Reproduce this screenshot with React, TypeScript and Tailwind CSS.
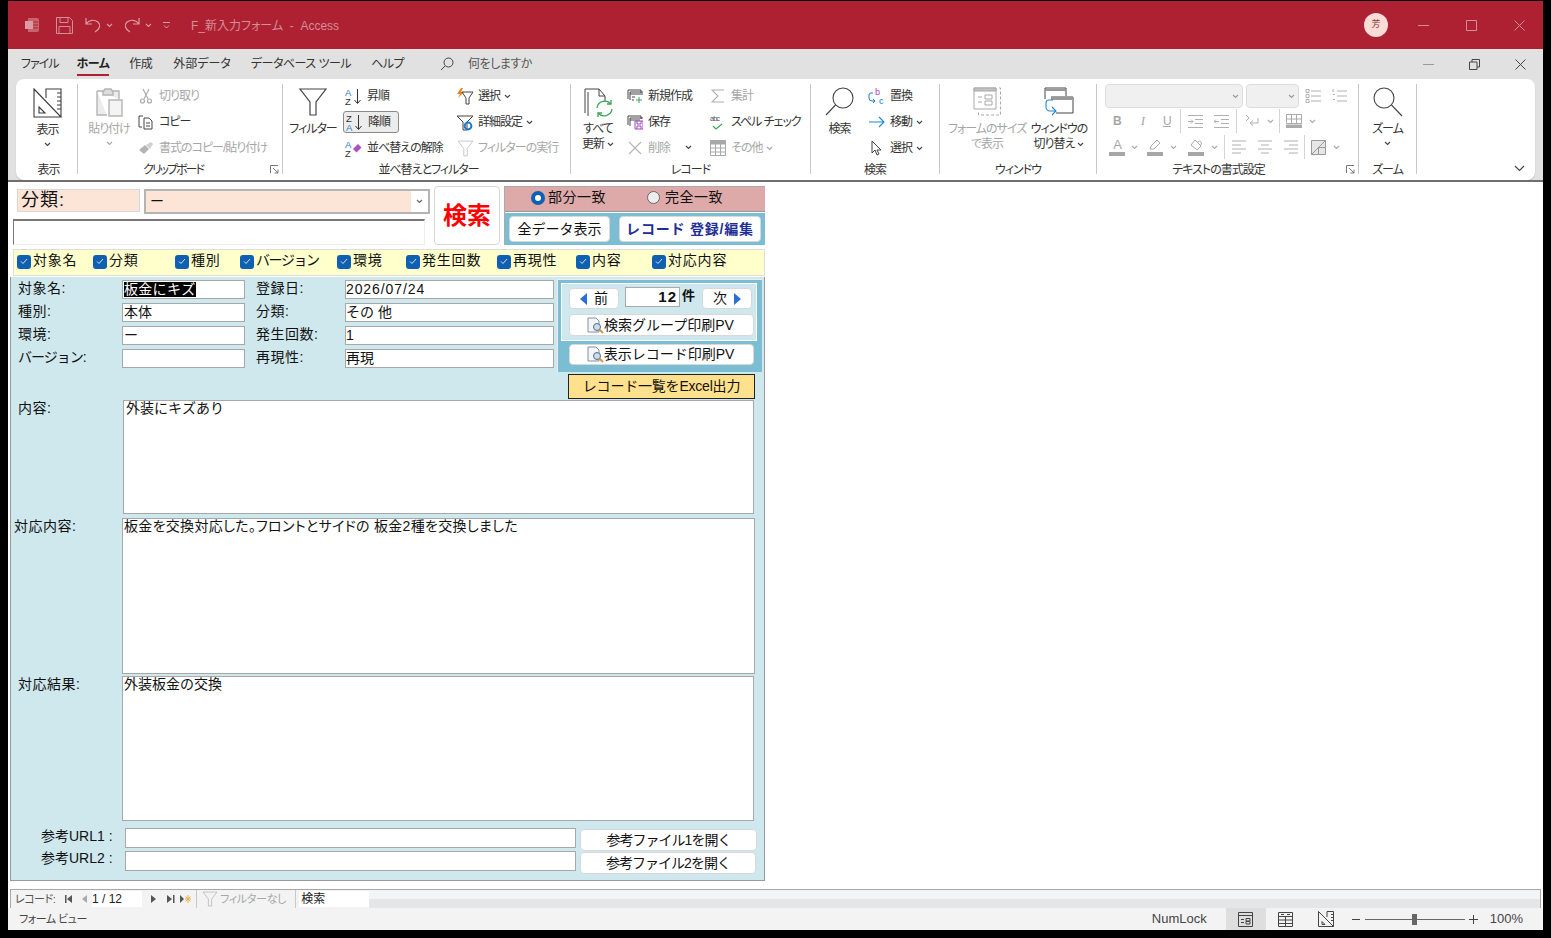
import React from 'react';

const JP = "font-['Liberation_Sans','Noto_Sans_CJK_JP',sans-serif]";

type IconProps = { className?: string };

const Chev = ({ className = 'text-[#444]' }: IconProps) => (
  <svg width="7" height="5" viewBox="0 0 7 5" className={className}>
    <path d="M1 1l2.5 2.5L6 1" fill="none" stroke="currentColor" strokeWidth="1.1" />
  </svg>
);

const DesignIcon = ({ size = 30 }: { size?: number }) => (
  <svg width={size} height={size} viewBox="0 0 30 30" fill="none" stroke="#3c3c3c" strokeWidth="1.1">
    <path d="M1 1l27 28H1zM6 19l6 6H6zM13 10V1h15v28M28 5h-4M28 9h-4M28 13h-4M28 17h-4M28 21h-4" />
  </svg>
);

const ClipIcon = () => (
  <svg width="28" height="32" viewBox="0 0 28 32" fill="none" stroke="#b4b4b4" strokeWidth="1.4">
    <path d="M2 4h22v8M2 4v24h10" fill="#ececec" />
    <path d="M8 5l2-3h6l2 3v3H8z" fill="#ddd" />
    <path d="M14 13h13v16H14z" fill="#f4f4f4" />
  </svg>
);

const Scissors = () => (
  <svg width="14" height="16" viewBox="0 0 14 16" fill="none" stroke="#a8a8a8" strokeWidth="1.1">
    <path d="M4 1l5 10M10 1L5 11" />
    <circle cx="3.5" cy="13" r="2" />
    <circle cx="10.5" cy="13" r="2" />
  </svg>
);

const CopyIcon = () => (
  <svg width="16" height="15" viewBox="0 0 16 15" fill="none" stroke="#444" strokeWidth="1">
    <path d="M5 1H1v11h3" />
    <path d="M6 3h5l3 3v8H6zM8 8h4M8 11h4" />
  </svg>
);

const BrushIcon = () => (
  <svg width="16" height="14" viewBox="0 0 16 14">
    <path d="M1 9l6-5 4 4-5 5z" fill="#b4b4b4" />
    <path d="M8 4l5-3 2 2-3 5z" fill="#d0d0d0" />
  </svg>
);

const Funnel = ({ size = 30, color = '#444' }: { size?: number; color?: string }) => (
  <svg width={size} height={size} viewBox="0 0 30 30" fill="none" stroke={color} strokeWidth="1.2">
    <path d="M2 2h26L18 15v13h-6V15z" />
  </svg>
);

const SortIcon = ({ top, bottom }: { top: string; bottom: string }) => (
  <svg width="18" height="17" viewBox="0 0 18 17">
    <text x="0" y="7.5" fontSize="9.5" fontFamily="Liberation Sans" fill={top === 'A' ? '#1e79c9' : '#333'}>{top}</text>
    <text x="0" y="16.5" fontSize="9.5" fontFamily="Liberation Sans" fill={bottom === 'A' ? '#1e79c9' : '#333'}>{bottom}</text>
    <path d="M12.5 1v14M9.5 12l3 3.5 3-3.5" fill="none" stroke="#333" strokeWidth="1" />
  </svg>
);

const ClearSort = () => (
  <svg width="18" height="17" viewBox="0 0 18 17">
    <text x="0" y="7.5" fontSize="9.5" fontFamily="Liberation Sans" fill="#1e79c9">A</text>
    <text x="0" y="16.5" fontSize="9.5" fontFamily="Liberation Sans" fill="#333">Z</text>
    <path d="M8 9l5-5 3.500 3.500-5 5z" fill="#b04fc0" />
  </svg>
);

const SelectFilter = () => (
  <svg width="18" height="17" viewBox="0 0 18 17">
    <path d="M5 0L1 6h3L2 10l6-6H5l2-4z" fill="#e8841a" />
    <path d="M6 4h11l-4 6v6h-3v-6z" fill="none" stroke="#444" strokeWidth="1" />
  </svg>
);

const AdvFilter = () => (
  <svg width="18" height="17" viewBox="0 0 18 17">
    <path d="M1 2h16l-6 6v8H7V8z" fill="none" stroke="#444" strokeWidth="1" />
    <circle cx="12" cy="12" r="3.4" fill="none" stroke="#1e79c9" strokeWidth="2" />
  </svg>
);

const RefreshIcon = () => (
  <svg width="30" height="32" viewBox="0 0 30 32" fill="none">
    <path d="M2 26V2h14l6 7v6M5 29V5" stroke="#444" strokeWidth="1" />
    <path d="M16 2v7h6" stroke="#444" strokeWidth="1" />
    <path d="M14 21a8 8 0 0 1 14-4M29 22a8 8 0 0 1-14 4" stroke="#3aa655" strokeWidth="1.3" />
    <path d="M28 13v4h-4M15 30v-4h4" stroke="#3aa655" strokeWidth="1.3" />
  </svg>
);

const NewRec = () => (
  <svg width="16" height="15" viewBox="0 0 16 15" fill="none" stroke="#444" strokeWidth="1">
    <path d="M1 10V1h13v3M3 11V3h13M3 5h13" />
    <path d="M5 8h3M5 11h2" />
    <path d="M12 8v6M9 11h6" stroke="#3aa655" />
  </svg>
);

const SaveRec = () => (
  <svg width="16" height="15" viewBox="0 0 16 15" fill="none" stroke="#444" strokeWidth="1">
    <path d="M1 10V1h13v3M3 11V3h13M3 5h10" />
    <path d="M8 6h8v8H8zM10 6v3h4V6M10 14v-3h4v3" stroke="#a844c0" />
  </svg>
);

const DeleteIcon = () => (
  <svg width="14" height="14" viewBox="0 0 14 14" stroke="#b4b4b4" strokeWidth="1.1">
    <path d="M1 1l12 12M13 1L1 13" />
  </svg>
);

const SigmaIcon = () => (
  <svg width="14" height="14" viewBox="0 0 14 14" fill="none" stroke="#b0b0b0" strokeWidth="1.1">
    <path d="M13 1H1l6 6-6 6h12" />
  </svg>
);

const SpellIcon = () => (
  <svg width="16" height="15" viewBox="0 0 16 15">
    <text x="0" y="6" fontSize="7.5" fontFamily="Liberation Sans" fill="#555">abc</text>
    <path d="M3 11l3 3 6-5" fill="none" stroke="#3aa655" strokeWidth="1.1" />
  </svg>
);

const GridIcon = ({ color = '#a8a8a8' }: { color?: string }) => (
  <svg width="16" height="16" viewBox="0 0 16 16" fill="none" stroke={color} strokeWidth="1">
    <path d="M.5.5h15v15H.5z" />
    <path d="M.5 1h15v3H.5z" fill={color} />
    <path d="M.5 8h15M.5 12h15M5.5 4v11.5M10.5 4v11.5" />
  </svg>
);

const Lens = ({ size = 30 }: { size?: number }) => (
  <svg width={size} height={size} viewBox="0 0 30 30" fill="none" stroke="#444" strokeWidth="1.1">
    <circle cx="18" cy="11" r="10" />
    <path d="M10.5 18L1 28" />
  </svg>
);

const LensFlip = () => (
  <svg width="30" height="30" viewBox="0 0 30 30" fill="none" stroke="#444" strokeWidth="1.1">
    <circle cx="11" cy="11" r="10" />
    <path d="M18.5 18L29 29" />
  </svg>
);

const ReplaceIcon = () => (
  <svg width="18" height="17" viewBox="0 0 18 17">
    <text x="7" y="7" fontSize="9" fontFamily="Liberation Sans" fill="#a844c0">b</text>
    <text x="11" y="16" fontSize="9" fontFamily="Liberation Sans" fill="#1e79c9">c</text>
    <path d="M5 5H3a2 2 0 0 0-2 2v3a3 3 0 0 0 3 3h3M5 11l2 2-2 2" fill="none" stroke="#1e79c9" strokeWidth="1" />
  </svg>
);

const ArrowBlue = () => (
  <svg width="16" height="12" viewBox="0 0 16 12" fill="none" stroke="#1e88d2" strokeWidth="1.1">
    <path d="M0 6h15M10 1l5 5-5 5" />
  </svg>
);

const Pointer = () => (
  <svg width="12" height="16" viewBox="0 0 12 16" fill="#fff" stroke="#444" strokeWidth="1">
    <path d="M1 1v12l3-3 2 5 2-1-2-4h4z" />
  </svg>
);

const FitIcon = () => (
  <svg width="28" height="30" viewBox="0 0 28 30" fill="none" stroke="#a8a8a8" strokeWidth="1">
    <path d="M1 1h22v21H1z" />
    <path d="M1 1h22v3H1z" fill="#c4c4c4" />
    <path d="M5 10h4M5 15h4M12 8h7v4h-7zM12 14h7v4h-7z" />
    <path d="M26 1h1.5v27h-22V24" strokeDasharray="3 2" />
  </svg>
);

const SwitchIcon = () => (
  <svg width="30" height="30" viewBox="0 0 30 30" fill="none">
    <path d="M1 12V1h21v8" stroke="#444" strokeWidth="1" />
    <path d="M1 2h21v2H1z" fill="#999" />
    <path d="M7 10h22v16H12" stroke="#444" strokeWidth="1" />
    <path d="M7 10h22v3H7z" fill="#999" />
    <path d="M9 13H5a3 3 0 0 0-3 3v4a4 4 0 0 0 4 4h6M8 20l4 4-4 4" stroke="#1e88d2" strokeWidth="1.1" />
  </svg>
);

const MiniLines = ({ kind }: { kind: 'left' | 'center' | 'right' }) => {
  const d =
    kind === 'left'
      ? 'M0 1h14M0 5h9M0 9h14M0 13h9'
      : kind === 'center'
        ? 'M0 1h14M3 5h8M0 9h14M3 13h8'
        : 'M0 1h14M5 5h9M0 9h14M5 13h9';
  return (
    <svg width="14" height="14" viewBox="0 0 14 14" stroke="#b0b0b0" strokeWidth="1">
      <path d={d} />
    </svg>
  );
};

const Indent = ({ flip = false }: { flip?: boolean }) => (
  <svg width="15" height="13" viewBox="0 0 15 13" fill="none" stroke="#b0b0b0" strokeWidth="1">
    <path d="M0 .5h15M7 4.5h8M7 8.5h8M0 12.5h15" />
    <path d={flip ? 'M5 6.5H0M2 4.5l-2 2 2 2' : 'M0 6.5h5M3 4.5l2 2-2 2'} />
  </svg>
);

const TitleCtrl = ({ d }: { d: string }) => (
  <svg width="11" height="11" viewBox="0 0 11 11" fill="none" stroke="currentColor" strokeWidth="1">
    <path d={d} />
  </svg>
);

const SmallBtn = ({
  icon,
  label,
  dim = false,
  caret = false,
  w,
  boxed = false,
}: {
  icon: React.ReactNode;
  label: string;
  dim?: boolean;
  caret?: boolean;
  w: string;
  boxed?: boolean;
}) => (
  <div
    className={`flex h-[22px] translate-y-px items-center gap-[4px] rounded-[3px] pl-[2px] ${w} ${boxed ? 'border border-[#8a8a8a] bg-[#ececec]' : ''}`}
  >
    <span className="flex w-[18px] shrink-0 justify-center">{icon}</span>
    <span className={`whitespace-nowrap text-[12px] ${dim ? 'text-[#a6a6a6]' : 'text-[#333]'}`}>{label}</span>
    {caret && <Chev className={dim ? 'text-[#aaa]' : 'text-[#444]'} />}
  </div>
);

const BigBtn = ({
  icon,
  lines,
  dim = false,
  w,
  caret = false,
  inlineCaret = false,
}: {
  icon: React.ReactNode;
  lines: string[];
  dim?: boolean;
  w: string;
  caret?: boolean;
  inlineCaret?: boolean;
}) => (
  <div className={`flex flex-col items-center ${w}`}>
    <div className="flex h-[34px] items-start pt-[3px]">{icon}</div>
    <div className={`mt-[4px] text-center text-[12px] leading-[15px] ${dim ? 'text-[#a6a6a6]' : 'text-[#333]'}`}>
      {lines.map((l, i) => (
        <div key={l} className="flex items-center justify-center gap-[3px] whitespace-nowrap">
          {l}
          {inlineCaret && i === lines.length - 1 && <Chev />}
        </div>
      ))}
    </div>
    {caret && (
      <div className="mt-[4px]">
        <Chev className={dim ? 'text-[#aaa]' : 'text-[#444]'} />
      </div>
    )}
  </div>
);

const Group = ({
  w,
  label,
  labelClass = '',
  launcher = false,
  children,
}: {
  w: string;
  label: string;
  labelClass?: string;
  launcher?: boolean;
  children: React.ReactNode;
}) => (
  <div className={`relative flex h-[90px] shrink-0 flex-col border-r border-[#c8c8c8] ${w}`}>
    <div className="flex h-[76px] shrink-0">{children}</div>
    <div className={`h-[14px] whitespace-nowrap text-center text-[12px] leading-[20px] text-[#333] ${labelClass}`}>{label}</div>
    {launcher && (
      <svg width="9" height="9" viewBox="0 0 9 9" className="absolute bottom-[0px] right-[3px]" fill="none" stroke="#777">
        <path d="M.5 8V.5H8M3 3l5 5M8 4.5V8H4.5" />
      </svg>
    )}
  </div>
);

const Ribbon = () => (
  <div className="mx-[8px] flex h-[101px] rounded-[8px] bg-white pt-[5px] tracking-[-1px] shadow-[0_1px_1px_#bbb]">
    <Group w="w-[62px]" label="表示" labelClass="pl-[4px]">
      <BigBtn w="w-[61px] ml-[2px] pt-[1px]" icon={<DesignIcon />} lines={['表示']} caret />
    </Group>

    <Group w="w-[205px]" label="クリップボード" labelClass="pr-[14px] tracking-[-2px]" launcher>
      <BigBtn w="w-[50px] ml-[6px]" icon={<ClipIcon />} lines={['貼り付け']} dim caret />
      <div className="ml-[1px] flex flex-col gap-[4px]">
        <SmallBtn w="w-[140px]" icon={<Scissors />} label="切り取り" dim />
        <SmallBtn w="w-[140px]" icon={<CopyIcon />} label="コピー" />
        <SmallBtn w="w-[140px]" icon={<BrushIcon />} label="書式のコピー/貼り付け" dim />
      </div>
    </Group>

    <Group w="w-[288px]" label="並べ替えとフィルター" labelClass="pl-[4px]">
      <BigBtn w="w-[60px]" icon={<Funnel />} lines={['フィルター']} />
      <div className="flex w-[111px] flex-col gap-[4px]">
        <SmallBtn w="w-[56px]" icon={<SortIcon top="A" bottom="Z" />} label="昇順" />
        <SmallBtn w="w-[56px]" icon={<SortIcon top="Z" bottom="A" />} label="降順" boxed />
        <SmallBtn w="w-[110px]" icon={<ClearSort />} label="並べ替えの解除" />
      </div>
      <div className="flex flex-col gap-[4px]">
        <SmallBtn w="w-[100px]" icon={<SelectFilter />} label="選択" caret />
        <SmallBtn w="w-[100px]" icon={<AdvFilter />} label="詳細設定" caret />
        <SmallBtn w="w-[110px]" icon={<Funnel size={17} color="#b0b0b0" />} label="フィルターの実行" dim />
      </div>
    </Group>

    <Group w="w-[240px]" label="レコード">
      <BigBtn w="w-[52px] ml-[1px]" icon={<RefreshIcon />} lines={['すべて', '更新']} inlineCaret />
      <div className="flex w-[83px] flex-col gap-[4px]">
        <SmallBtn w="w-[80px]" icon={<NewRec />} label="新規作成" />
        <SmallBtn w="w-[80px]" icon={<SaveRec />} label="保存" />
        <div className="flex w-[70px] items-center justify-between pr-[2px]">
          <SmallBtn w="w-[50px]" icon={<DeleteIcon />} label="削除" dim />
          <Chev />
        </div>
      </div>
      <div className="flex flex-col gap-[4px]">
        <SmallBtn w="w-[90px]" icon={<SigmaIcon />} label="集計" dim />
        <SmallBtn w="w-[90px]" icon={<SpellIcon />} label="スペル チェック" />
        <SmallBtn w="w-[90px]" icon={<GridIcon />} label="その他" dim caret />
      </div>
    </Group>

    <Group w="w-[129px]" label="検索">
      <BigBtn w="w-[53px] ml-[2px]" icon={<Lens />} lines={['検索']} />
      <div className="flex flex-col gap-[4px]">
        <SmallBtn w="w-[70px]" icon={<ReplaceIcon />} label="置換" />
        <SmallBtn w="w-[70px]" icon={<ArrowBlue />} label="移動" caret />
        <SmallBtn w="w-[70px]" icon={<Pointer />} label="選択" caret />
      </div>
    </Group>

    <Group w="w-[157px]" label="ウィンドウ">
      <BigBtn w="w-[82px] ml-[6px]" icon={<FitIcon />} lines={['フォームのサイズ', 'で表示']} dim />
      <BigBtn w="w-[62px]" icon={<SwitchIcon />} lines={['ウィンドウの', '切り替え']} inlineCaret />
    </Group>

    <Group w="w-[262px]" label="テキストの書式設定" labelClass="pr-[18px]" launcher>
      <div className="ml-[8px] flex flex-col">
        <div className="flex items-center">
          <div className="flex h-[24px] w-[138px] items-center justify-end rounded-[4px] border border-[#ddd] bg-[#f0f0f0] pr-[3px]">
            <Chev className="text-[#999]" />
          </div>
          <div className="ml-[3px] flex h-[24px] w-[53px] items-center justify-end rounded-[4px] border border-[#ddd] bg-[#f0f0f0] pr-[3px]">
            <Chev className="text-[#999]" />
          </div>
          <svg width="16" height="16" viewBox="0 0 16 16" className="ml-[6px]" stroke="#b0b0b0" fill="none">
            <path d="M6 3h10M6 8h10M6 13h10M1 1.5h3v3H1zM1 6.5h3v3H1zM1 11.5h3v3H1z" />
          </svg>
          <svg width="16" height="16" viewBox="0 0 16 16" className="ml-[10px]" stroke="#b0b0b0" fill="none">
            <path d="M6 3h10M6 8h10M6 13h10M2 1v3M2 6.5h2M2 11.5h2" />
          </svg>
        </div>
        <div className="mt-[1px] flex h-[24px] items-center text-[#a6a6a6]">
          <span className="ml-[8px] font-['Liberation_Sans',sans-serif] text-[12px] font-bold">B</span>
          <span className="ml-[20px] font-['Liberation_Serif',serif] text-[13px] italic">I</span>
          <span className="ml-[19px] font-['Liberation_Sans',sans-serif] text-[12px] underline">U</span>
          <div className="ml-[9px] h-[24px] w-px bg-[#d4d4d4]" />
          <div className="ml-[7px]"><Indent /></div>
          <div className="ml-[11px]"><Indent flip /></div>
          <div className="ml-[7px] h-[24px] w-px bg-[#d4d4d4]" />
          <svg width="15" height="14" viewBox="0 0 15 14" className="ml-[8px]" fill="none" stroke="#b0b0b0">
            <path d="M1 1l3 3-3 3M13 4v5H5M8 6.5L5 9l3 2.500" />
          </svg>
          <div className="ml-[7px]"><Chev className="text-[#aaa]" /></div>
          <div className="ml-[5px] h-[24px] w-px bg-[#d4d4d4]" />
          <div className="ml-[6px] flex flex-col">
            <svg width="16" height="14" viewBox="0 0 16 14" fill="none" stroke="#aaa">
              <path d="M.5.500h15v9H.5zM.5 5h15M5.500.500v9M10.500.500v9" />
              <path d="M0 11h16v3H0z" fill="#aaa" />
            </svg>
          </div>
          <div className="ml-[7px]"><Chev className="text-[#aaa]" /></div>
        </div>
        <div className="mt-[2px] flex h-[24px] items-center">
          <div className="ml-[4px] flex w-[16px] flex-col items-center">
            <span className="font-['Liberation_Sans',sans-serif] text-[13px] leading-[12px] text-[#a6a6a6]">A</span>
            <div className="mt-[1px] h-[4px] w-[16px] bg-[#a6a6a6]" />
          </div>
          <div className="ml-[6px]"><Chev className="text-[#aaa]" /></div>
          <div className="ml-[9px] flex w-[16px] flex-col items-center">
            <svg width="14" height="12" viewBox="0 0 14 12" fill="none" stroke="#aaa">
              <path d="M2 10l1-3 6-6 3 3-6 6z" />
            </svg>
            <div className="mt-[1px] h-[4px] w-[16px] bg-[#a6a6a6]" />
          </div>
          <div className="ml-[7px]"><Chev className="text-[#aaa]" /></div>
          <div className="ml-[11px] flex w-[16px] flex-col items-center">
            <svg width="14" height="12" viewBox="0 0 14 12" fill="none" stroke="#aaa">
              <path d="M6 1l6 6-4 4-6-5zM9 3c2-2 4 0 3 3" />
            </svg>
            <div className="mt-[1px] h-[4px] w-[16px] bg-[#a6a6a6]" />
          </div>
          <div className="ml-[7px]"><Chev className="text-[#aaa]" /></div>
          <div className="ml-[6px] h-[24px] w-px bg-[#d4d4d4]" />
          <div className="ml-[7px]"><MiniLines kind="left" /></div>
          <div className="ml-[12px]"><MiniLines kind="center" /></div>
          <div className="ml-[12px]"><MiniLines kind="right" /></div>
          <div className="ml-[6px] h-[24px] w-px bg-[#d4d4d4]" />
          <svg width="15" height="15" viewBox="0 0 15 15" className="ml-[6px]" fill="#e6e6e6" stroke="#999">
            <path d="M.5.500h14v14H.5zM.5 14.500l14-14M7.500 7.500v7M7.500 7.500h7" />
          </svg>
          <div className="ml-[7px]"><Chev className="text-[#aaa]" /></div>
        </div>
      </div>
    </Group>

    <Group w="w-[58px]" label="ズーム">
      <BigBtn w="w-[60px]" icon={<LensFlip />} lines={['ズーム']} caret />
    </Group>

    <div className="flex flex-1 items-end justify-end pb-[8px] pr-[10px]">
      <svg width="11" height="7" viewBox="0 0 11 7" fill="none" stroke="#444" strokeWidth="1.1">
        <path d="M1 1l4.500 4.500L10 1" />
      </svg>
    </div>
  </div>
);

const TitleBar = () => (
  <div className="flex h-[48px] items-center bg-[#ae2132] text-[#d58e98]">
    <svg width="16" height="16" viewBox="0 0 16 16" className="ml-[16px]">
      <path d="M4 1h9a2 2 0 0 1 2 2v10a2 2 0 0 1-2 2H4z" fill="#c9646f" />
      <path d="M1 4h8v8H1z" fill="#dc9aa3" />
      <path d="M9 5h5M9 8h5M9 11h5" stroke="#ae2132" />
    </svg>
    <svg width="17" height="17" viewBox="0 0 17 17" className="ml-[16px]" fill="none" stroke="currentColor">
      <path d="M.5.500h13l3 3v13H.5zM4 .500v5h8v-5M3 16.500v-7h11v7" />
    </svg>
    <svg width="16" height="16" viewBox="0 0 16 16" className="ml-[12px]" fill="none" stroke="#dc9aa3" strokeWidth="1.2">
      <path d="M1 1v6h6M1 7c3-4 8-5 12-2 3 3 2 7-3 10" />
    </svg>
    <Chev className="ml-[5px] text-[#dc9aa3]" />
    <svg width="16" height="16" viewBox="0 0 16 16" className="ml-[11px]" fill="none" stroke="#dc9aa3" strokeWidth="1.2">
      <path d="M15 1v6H9M15 7c-3-4-8-5-12-2-3 3-2 7 3 10" />
    </svg>
    <Chev className="ml-[5px] text-[#dc9aa3]" />
    <svg width="7" height="7" viewBox="0 0 7 7" className="ml-[11px]" fill="none" stroke="#dc9aa3">
      <path d="M0 .500h7M1 3.500l2.500 2.500L6 3.500" />
    </svg>
    <span className="ml-[21px] mt-[2px] whitespace-pre text-[12px] text-[#d58e98]">F_新入力フォーム  -  Access</span>
    <div className="ml-auto flex items-center">
      <div className="flex h-[24px] w-[24px] items-center justify-center rounded-full bg-[#fbdcd6] text-[9px] text-[#8a3a3a]">芳</div>
      <div className="ml-[30px] w-[11px]"><TitleCtrl d="M0 5.500h11" /></div>
      <div className="ml-[37px] w-[11px]"><TitleCtrl d="M.5.500h10v10H.5z" /></div>
      <div className="ml-[37px] mr-[18px] w-[11px]"><TitleCtrl d="M.5.500l10 10M10.500.500l-10 10" /></div>
    </div>
  </div>
);

const TabBar = () => (
  <div className="flex h-[30px] items-center text-[12px] tracking-[-0.5px] text-[#333]">
    <span className="ml-[13px] tracking-[-1px]">ファイル</span>
    <span className="relative ml-[18px] font-bold text-[#222]">
      ホーム
      <span className="absolute bottom-[-3px] left-0 h-[2px] w-full bg-[#ae2132]" />
    </span>
    <span className="ml-[20px]">作成</span>
    <span className="ml-[21px] tracking-normal">外部データ</span>
    <span className="ml-[20px]">データベース ツール</span>
    <span className="ml-[20px]">ヘルプ</span>
    <svg width="14" height="14" viewBox="0 0 14 14" className="ml-[36px]" fill="none" stroke="#444">
      <circle cx="8.500" cy="5.500" r="4.500" />
      <path d="M5 9l-4 4" />
    </svg>
    <span className="ml-[14px] text-[#555]">何をしますか</span>
    <div className="ml-auto flex items-center text-[#444]">
      <div className="w-[11px] text-[#999]"><TitleCtrl d="M0 5.500h11" /></div>
      <div className="ml-[35px] w-[11px]"><TitleCtrl d="M.5 3h7.500v7.500H.5zM3 3V.500h7.500V8H8" /></div>
      <div className="ml-[35px] mr-[17px] w-[11px]"><TitleCtrl d="M.5.500l10 10M10.500.500l-10 10" /></div>
    </div>
  </div>
);

const Check = ({ label, w, tight = false }: { label: string; w: string; tight?: boolean }) => (
  <div className={`flex items-center ${w}`}>
    <div className="flex h-[14px] w-[14px] shrink-0 items-center justify-center rounded-[3px] bg-[#0f5fb3]">
      <svg width="8" height="7" viewBox="0 0 8 7" fill="none" stroke="#cfe2f5" strokeWidth="1">
        <path d="M1 3.500L3 5.500 7 1" />
      </svg>
    </div>
    <span className={`ml-[2px] -translate-y-px whitespace-nowrap ${tight ? 'tracking-[-1.400px]' : 'tracking-[0.8px]'}`}>{label}</span>
  </div>
);

const Field = ({ children, w, selected, wide }: { children?: string; w: string; selected?: boolean; wide?: boolean }) => (
  <div className={`flex h-[19px] shrink-0 items-center overflow-hidden border border-[#a8a8a8] bg-white pl-[1px] ${w}`}>
    {selected ? (
      <span className="bg-black leading-[15px] tracking-[0.3px] text-white">{children}</span>
    ) : (
      <span className={`whitespace-nowrap ${wide ? 'tracking-[0.9px]' : ''}`}>{children}</span>
    )}
  </div>
);

const FieldRow = ({ a, av, b, bv, sel, wide }: { a: string; av?: string; b: string; bv: string; sel?: boolean; wide?: boolean }) => (
  <div className="flex h-[19px] items-center">
    <span className={`ml-[7px] w-[104px] shrink-0 -translate-y-px whitespace-nowrap ${a.length > 5 ? 'tracking-[-1px]' : 'tracking-[0.5px]'}`}>{a}</span>
    <Field w="w-[123px]" selected={sel}>{av}</Field>
    <span className="ml-[11px] w-[89px] shrink-0 -translate-y-px tracking-[0.5px]">{b}</span>
    <Field w="w-[209px] pl-0!" wide={wide}>{bv}</Field>
  </div>
);

const FormBtn = ({ children, className = '' }: { children: React.ReactNode; className?: string }) => (
  <div className={`flex items-center justify-center rounded-[4px] border border-[#d8d8d8] bg-white ${className}`}>{children}</div>
);

const PrintIcon = () => (
  <svg width="17" height="17" viewBox="0 0 17 17">
    <path d="M1 1h8l3 3v11H1z" fill="#f4f6fa" stroke="#8090a8" />
    <circle cx="10" cy="10" r="3.500" fill="#bfe0f5" stroke="#667" />
    <path d="M12.500 12.500l3.500 3.500" stroke="#d49a3a" strokeWidth="2" />
  </svg>
);

const Triangle = ({ flip = false }: { flip?: boolean }) => (
  <svg width="7" height="12" viewBox="0 0 7 12">
    <path d={flip ? 'M0 0l7 6-7 6z' : 'M7 0L0 6l7 6z'} fill="#2a6fd6" />
  </svg>
);

const Memo = ({ children, className }: { children: string; className: string }) => (
  <div className={`shrink-0 border border-[#a8a8a8] bg-white px-[1px] leading-[14px] ${className}`}>{children}</div>
);

const AccessForm = () => (
  <div className="ml-[2px] mt-[4px] w-[755px] text-[14px] text-[#111]">
    <div className="flex h-[59px]">
      <div className="w-[420px]">
        <div className="mt-[3px] flex items-start">
          <div className="ml-[7px] flex h-[23px] w-[123px] items-center border border-[#d8d8d8] bg-[#fce4d6] pl-[3px] text-[18px] tracking-[1px]">分類:</div>
          <div className="ml-[4px] flex h-[25px] w-[286px] items-center border-2 border-[#b4b4b4] bg-[#fce4d6] pl-[4px]">
            <span>ー</span>
            <div className="ml-auto flex h-full w-[17px] items-center justify-center bg-white">
              <Chev className="text-[#666]" />
            </div>
          </div>
        </div>
        <div className="ml-[3px] mt-[5px] h-[26px] w-[412px] border-b border-l border-r border-t-2 border-b-[#eee] border-l-[#777] border-r-[#eee] border-t-[#777] bg-white" />
      </div>
      <div className="ml-[4px] flex h-[59px] w-[66px] items-center justify-center rounded-[4px] border border-[#d8d8d8] bg-white text-[24px] font-bold text-[#f00]">
        検索
      </div>
      <div className="ml-[4px] w-[261px] border-l border-t border-[#aaa]">
        <div className="flex h-[25px] items-center border-b border-[#999] bg-[#dea9a9] pb-[3px] tracking-[0.5px]">
          <div className="ml-[26px] flex h-[14px] w-[14px] items-center justify-center rounded-full bg-[#0f5fb3]">
            <div className="h-[6px] w-[6px] rounded-full bg-white" />
          </div>
          <span className="ml-[3px]">部分一致</span>
          <div className="ml-[41px] h-[13px] w-[13px] rounded-full border border-[#666] bg-[#eee]" />
          <span className="ml-[5px]">完全一致</span>
        </div>
        <div className="mt-[1px] flex h-[32px] items-center bg-[#7bbdd3]">
          <FormBtn className="ml-[4px] h-[26px] w-[101px]">全データ表示</FormBtn>
          <FormBtn className="ml-[9px] h-[26px] w-[142px] font-bold tracking-[0.8px] text-[#1f2f96]">レコード 登録/編集</FormBtn>
        </div>
      </div>
    </div>

    <div className="ml-[3px] mt-[4px] flex h-[27px] items-center border border-[#ddd] bg-[#ffffcc] pb-[2px] pl-[3px]">
      <Check w="w-[76px]" label="対象名" />
      <Check w="w-[82px]" label="分類" />
      <Check w="w-[65px]" label="種別" />
      <Check w="w-[97px]" label="バージョン" tight />
      <Check w="w-[69px]" label="環境" />
      <Check w="w-[91px]" label="発生回数" />
      <Check w="w-[79px]" label="再現性" />
      <Check w="w-[76px]" label="内容" />
      <Check w="w-[90px]" label="対応内容" />
    </div>

    <div className="mt-[1px] h-[604px] border-b border-l border-r border-[#999] bg-[#cfe8ee]">
      <div className="flex h-[122px]">
        <div className="flex w-[545px] shrink-0 flex-col gap-[4px] pt-[3px]">
          <FieldRow a="対象名:" av="板金にキズ" b="登録日:" bv="2026/07/24" sel wide />
          <FieldRow a="種別:" av="本体" b="分類:" bv="その 他" />
          <FieldRow a="環境:" av="ー" b="発生回数:" bv="1" />
          <FieldRow a="バージョン:" b="再現性:" bv="再現" />
        </div>
        <div className="ml-[1px] pt-[2px]">
          <div className="h-[93px] w-[205px] border-l border-t border-[#eee] bg-[#7bbdd3] pl-[3px] pt-[3px]">
            <div className="h-[58px] w-[196px] border border-white bg-[#cfe8ee] pl-[7px] pt-[3px]">
              <div className="flex items-start">
                <FormBtn className="mt-[1px] h-[21px] w-[50px] gap-[7px]"><Triangle />前</FormBtn>
                <div className="ml-[6px] flex h-[20px] w-[55px] items-center justify-end border border-[#a8a8a8] bg-white pr-[2px] text-[15px] font-bold tracking-[1px]">12</div>
                <span className="ml-[2px] text-[13px] font-bold leading-[18px]">件</span>
                <FormBtn className="ml-[7px] mt-[1px] h-[21px] w-[50px] gap-[7px]">次<Triangle flip /></FormBtn>
              </div>
              <FormBtn className="mt-[5px] h-[22px] w-[185px] pr-[2px]"><PrintIcon />検索グループ印刷PV</FormBtn>
            </div>
            <FormBtn className="ml-[8px] mt-[3px] h-[21px] w-[185px] pr-[2px]"><PrintIcon />表示レコード印刷PV</FormBtn>
          </div>
          <div className="ml-[11px] mt-[2px] flex h-[25px] w-[187px] items-center justify-center border border-[#222] bg-[#ffe08c] tracking-[-0.2px]">レコード一覧をExcel出力</div>
        </div>
      </div>

      <div className="mt-[1px] flex">
        <span className="ml-[7px] mt-[-2px] w-[105px] shrink-0 tracking-[0.5px]">内容:</span>
        <Memo className="h-[114px] w-[631px] pl-[2px]">外装にキズあり</Memo>
      </div>
      <div className="mt-[4px] flex">
        <span className="ml-[3px] mt-[-2px] w-[108px] shrink-0 tracking-[0.5px]">対応内容:</span>
        <Memo className="h-[156px] w-[633px] tracking-[0.3px] [font-feature-settings:'palt']">板金を交換対応した。フロントとサイドの 板金2種を交換しました</Memo>
      </div>
      <div className="mt-[2px] flex">
        <span className="ml-[7px] mt-[-2px] w-[104px] shrink-0 tracking-[0.5px]">対応結果:</span>
        <Memo className="h-[145px] w-[632px]">外装板金の交換</Memo>
      </div>

      <div className="mt-[7px] flex items-start">
        <span className="ml-[30px] w-[84px] shrink-0 leading-[16px]">参考URL1 :</span>
        <div className="h-[20px] w-[451px] border border-[#a8a8a8] bg-white" />
        <FormBtn className="ml-[4px] mt-[1px] h-[22px] w-[177px] tracking-[-1px]">参考ファイル1を開く</FormBtn>
      </div>
      <div className="flex items-start">
        <span className="ml-[30px] w-[84px] shrink-0 leading-[14px]">参考URL2 :</span>
        <div className="h-[20px] w-[451px] border border-[#a8a8a8] bg-white" />
        <FormBtn className="ml-[4px] mt-[1px] h-[22px] w-[176px] tracking-[-1px]">参考ファイル2を開く</FormBtn>
      </div>
    </div>
  </div>
);

const NavBar = () => (
  <div className="mx-[2px] flex h-[19px] items-stretch border-x border-t border-[#a8a8a8] bg-[linear-gradient(#f3f4f6_50%,#e4e6e8_50%)] text-[11px] text-[#555]">
    <div className="flex items-center bg-[#f3f3f3] pl-[4px]">
      <span className="w-[47px] whitespace-nowrap tracking-[-0.5px]">レコード:</span>
      <svg width="8" height="8" viewBox="0 0 8 8" className="ml-[3px]" fill="#555"><path d="M0 0h1.500v8H0zM7 0v8L2 4z" /></svg>
      <svg width="5" height="8" viewBox="0 0 5 8" className="ml-[9px]" fill="#aaa"><path d="M5 0v8L0 4z" /></svg>
      <div className="ml-[5px] flex h-[16px] w-[50px] items-center bg-white text-[12px] text-[#222]">1 / 12</div>
      <svg width="5" height="8" viewBox="0 0 5 8" className="ml-[9px]" fill="#555"><path d="M0 0v8l5-4z" /></svg>
      <svg width="8" height="8" viewBox="0 0 8 8" className="ml-[11px]" fill="#555"><path d="M0 0v8l5-4zM6 0h1.500v8H6z" /></svg>
      <svg width="11" height="8" viewBox="0 0 11 8" className="ml-[5px]">
        <path d="M0 0v8l4-4z" fill="#555" />
        <path d="M8 0v8M5 4h6M5.500 1.500l5 5M10.500 1.500l-5 5" stroke="#e8b04a" />
      </svg>
      <div className="ml-[5px] h-full w-px bg-[#c8c8c8]" />
      <div className="ml-[5px]"><Funnel size={16} color="#aaa" /></div>
      <span className="ml-[2px] whitespace-nowrap tracking-[-0.3px] text-[#a6a6a6]">フィルターなし</span>
      <div className="ml-[9px] h-full w-px bg-[#c8c8c8]" />
      <div className="ml-[3px] flex h-[16px] w-[70px] items-center bg-white pl-[2px] text-[12px] text-[#222]">検索</div>
    </div>
  </div>
);

const StatusBar = () => (
  <div className="flex h-[22px] items-center bg-[#f3f3f3] text-[12px] text-[#444]">
    <span className="ml-[11px] text-[11px] tracking-[-0.5px]">フォーム ビュー</span>
    <div className="ml-auto flex h-full items-center">
      <span className="font-['Liberation_Sans',sans-serif] text-[13px]">NumLock</span>
      <div className="ml-[19px] flex h-full w-[40px] items-center justify-center bg-[#dedede]">
        <svg width="15" height="15" viewBox="0 0 15 15" fill="none" stroke="#444">
          <path d="M.5.500h14v14H.5zM.5 3.500h14M3 7.500h3M3 10.500h3M8 6.500h4v2.500H8zM8 9.500h4V12H8z" />
        </svg>
      </div>
      <div className="flex h-full w-[40px] items-center justify-center">
        <svg width="15" height="15" viewBox="0 0 15 15" fill="none" stroke="#444">
          <path d="M.5.500h14v14H.5zM.5 4.500h14M.5 8h14M.5 11.500h14M7.500 4.500v10M3 2.500h3M9 2.500h3" />
        </svg>
      </div>
      <div className="flex h-full w-[40px] items-center justify-center">
        <svg width="16" height="16" viewBox="0 0 16 16" fill="none" stroke="#444">
          <path d="M.5.500l15 15H.5zM4 10.500l3 3H4zM9 6V.500h6.500v15M15 3.500h-2M15 6.500h-2M15 9.500h-2" />
        </svg>
      </div>
      <svg width="9" height="9" viewBox="0 0 9 9" className="ml-[6px]" stroke="#444"><path d="M0 4.500h8" /></svg>
      <div className="relative ml-[4px] h-px w-[100px] bg-[#666]">
        <div className="absolute left-[47px] top-[-5px] h-[11px] w-[5px] bg-[#666]" />
      </div>
      <svg width="9" height="9" viewBox="0 0 9 9" className="ml-[4px]" stroke="#444"><path d="M0 4.500h9M4.500 0v9" /></svg>
      <span className="ml-[12px] mr-[20px] font-['Liberation_Sans',sans-serif] text-[13px]">100%</span>
    </div>
  </div>
);

const App: React.FC = () => {
  return (
    <div className={`flex h-[938px] w-[1551px] flex-col overflow-hidden bg-black px-[8px] pb-[8px] pt-[1px] ${JP} [font-feature-settings:'palt']`}>
      <TitleBar />
      <div className="bg-[#e1e1e1]">
        <TabBar />
        <Ribbon />
      </div>
      <div className="h-[2px] bg-[#6e6e6e]" />
      <div className="flex min-h-0 flex-1 flex-col bg-white">
        <div className="flex-1 overflow-hidden [font-feature-settings:normal]">
          <AccessForm />
        </div>
        <NavBar />
        <StatusBar />
      </div>
    </div>
  );
};

export default App;
